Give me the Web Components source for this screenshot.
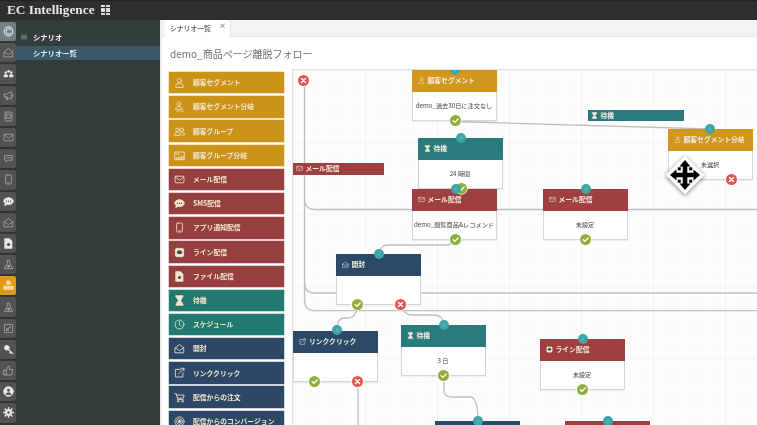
<!DOCTYPE html>
<html lang="ja"><head><meta charset="utf-8"><title>EC Intelligence</title>
<style>
html,body{margin:0;padding:0;height:425px;overflow:hidden;background:#fff}
body{font-family:"Noto Sans CJK JP","Noto Sans",sans-serif}
</style></head><body>
<x-app></x-app>
<script>
const ICONS={
user:'<circle cx="8" cy="5" r="3"/><path d="M2.5 14.5v-1.5c0-2.5 2.5-3.5 5.5-3.5s5.5 1 5.5 3.5v1.5z"/>',
usersplit:'<circle cx="7" cy="4" r="2.6"/><path d="M2.5 11c0-2 2-3 4.5-3s4.5 1 4.5 3v1h-9z"/><path d="M4 14.5h4M10 14.5h3.5"/>',
group:'<circle cx="5" cy="5.5" r="2.5"/><circle cx="11.5" cy="5.5" r="2.5"/><path d="M.8 13v-1.2c0-2 2-2.8 4.2-2.8s4.2.8 4.2 2.8V13zM10.5 9.1c2.4-.3 4.8.6 4.8 2.7V13h-3.5"/>',
groupsplit:'<path d="M1 13.5V3h14v10.5z"/><path d="M3 13.5v-2h3v2M7 13.5v-3h3v3M11 13.5V9h2.5v4.5M3 6h5"/>',
mail:'<rect x="1.5" y="3.2" width="13" height="9.6" rx="1.2"/><path d="M2 4.5l6 4.5 6-4.5"/>',
sms:'<path fill="currentColor" d="M8 2.5c3.9 0 7 2.2 7 5s-3.1 5-7 5c-.8 0-1.6-.1-2.3-.3L2.5 14l.8-3C2 10 1 8.800 1 7.500c0-2.800 3.100-5 7-5z"/><g fill="#333" stroke="none"><circle cx="5" cy="7.500" r=".9"/><circle cx="8" cy="7.500" r=".9"/><circle cx="11" cy="7.500" r=".9"/></g>',
phone:'<rect x="3.800" y="1.500" width="8.400" height="13" rx="1.600"/><path d="M7 12.800h2"/>',
line:'<rect x="2" y="2" width="12" height="12" rx="2.200" fill="currentColor"/><ellipse cx="8" cy="7.600" rx="3.700" ry="3" fill="#444" stroke="none"/>',
file:'<path fill="currentColor" d="M3 1h6.500L13 4.500V15H3z"/><circle cx="8" cy="9.500" r="2.200" fill="#444" stroke="none"/>',
hourglass:'<path fill="currentColor" d="M3 1h10v1.800h-1c0 2.700-1.500 4-2.800 5.200 1.300 1.200 2.800 2.500 2.800 5.200h1V15H3v-1.800h1c0-2.700 1.500-4 2.800-5.200C5.500 6.800 4 5.500 4 2.800H3z"/>',
clock:'<circle cx="8" cy="8" r="6.500"/><path d="M8 4v4.500l2.500 1.600"/>',
open:'<path d="M1.800 7L8 2.200 14.200 7v7.300H1.800z"/><path d="M1.800 7L8 11l6.200-4"/>',
link:'<path d="M9.500 3.500H2v11h11V8.500"/><path d="M6.500 10L14.500 2M10.500 1.800h4v4"/>',
cart:'<path d="M.8 2.500h2.600l2 8.500h7.800M4 4.500h10.800l-1.400 4.500H5"/><circle cx="6" cy="13.500" r="1.100"/><circle cx="12.500" cy="13.500" r="1.100"/>',
target:'<circle cx="8" cy="8" r="6.800"/><circle cx="8" cy="8" r="4.200"/><circle cx="8" cy="8" r="1.700" fill="currentColor"/>',
arrowc:'<circle cx="8" cy="8" r="6.300" stroke-width="1.700"/><path d="M11 5.500a3.700 3.700 0 1 0 0 5" stroke-width="1.500"/>',
people:'<g fill="currentColor" stroke="none"><circle cx="4" cy="6.500" r="1.800"/><circle cx="8" cy="4.800" r="2"/><circle cx="12" cy="6.500" r="1.800"/><path d="M1 13.500v-2.500c0-1.300 1.400-2 3-2s3 .7 3 2v2.500zM9 13.500v-2.500c0-1.300 1.400-2 3-2s3 .7 3 2v2.500z"/></g>',
mega:'<path d="M2 6v4h3l7 3.500V2.500L5 6zM4 10l1 4h2l-1-3.500M14 6v4"/>',
doc:'<rect x="3" y="1.500" width="10" height="13" rx="1.200"/><rect x="5.500" y="4.500" width="5" height="6"/>',
chat:'<path d="M3 3.500h10.500v7H7l-2.500 2.500v-2.500H3z"/><path d="M5.500 7h6"/>',
flask:'<path d="M6.500 1.800h3v3.500l4.500 8.700H2l4.500-8.700z"/><circle cx="8" cy="10.500" r="1.600" fill="currentColor"/>',
org:'<path fill="currentColor" d="M6 1.500h4l.8 4.500H5.200zM1 9h4v4.500H1zM6 9h4v4.500H6zM11 9h4v4.500h-4z"/>',
edit:'<rect x="2" y="2" width="12" height="12" rx="1"/><path d="M5 11l6-6M5 8l3 3" stroke-width="1.500"/>',
key:'<circle cx="5.500" cy="5.500" r="3.400" fill="currentColor"/><path d="M8 8l6 6M11.500 11.500l-1.500 1.500" stroke-width="2"/>',
thumb:'<path d="M1.500 7.500h3v7h-3zM4.500 8l3.300-6.300c1.300 0 2 .9 1.700 2.200L9 6.500h5l-1.300 8H4.500"/>',
cuser:'<circle cx="8" cy="8" r="7" fill="currentColor"/><circle cx="8" cy="6.200" r="2.100" fill="#555" stroke="none"/><path d="M3.800 13c.4-2.500 2-3.400 4.200-3.400s3.800.9 4.200 3.400" fill="#555" stroke="none"/>',
gear:'<circle cx="8" cy="8" r="4.500" fill="currentColor"/><circle cx="8" cy="8" r="1.800" fill="#555" stroke="none"/><path stroke-width="2.200" d="M8 1v3M8 12v3M1 8h3M12 8h3M3 3l2 2M11 11l2 2M13 3l-2 2M5 11l-2 2"/>',
menu:'<path d="M1 3h14M1 6.300h14M1 9.700h14M1 13h14" stroke-width="1.600"/>'
};
function def(name,css,html,init){
  customElements.define(name,class extends HTMLElement{
    connectedCallback(){
      if(this.shadowRoot)return;
      const r=this.attachShadow({mode:'open'});
      r.innerHTML='<style>'+css+'</style>'+(typeof html==='function'?html(this):html);
      if(init)init(this,r);
    }
  });
}
def('x-icon',':host{display:inline-block;line-height:0;flex:none}svg{width:100%;height:100%;fill:none;stroke:currentColor;stroke-width:1.200;stroke-linejoin:round;stroke-linecap:round}',
 h=>`<svg viewBox="0 0 16 16">${ICONS[h.getAttribute('name')]||''}</svg>`);

def('x-top',`:host{display:flex;align-items:center;height:20px;flex:none;background:linear-gradient(#1f1f1f 0,#2f2f2f 2px,#2e2e2e);color:#e6e6e6;padding-left:7px;gap:6px;box-sizing:border-box;font:bold 13.300px "Liberation Serif",serif;white-space:nowrap}
 .g{display:grid;grid-template-columns:repeat(4,2px);grid-auto-rows:2px;gap:.6px}.g i{background:#ddd}`,
 `<span>EC Intelligence</span><span class="g">${'<i></i>'.repeat(16)}</span>`);

def('x-rail-item',`:host{display:flex;align-items:center;justify-content:center;width:16px;height:19.200px;flex:none;box-sizing:border-box;background:#525252;color:#a9a9a9;border-radius:0 2px 2px 0}
 :host([bright]){color:#e8e8e8}:host([active]){background:#de9a17;color:#f6dfae}:host([sel]){background:#74807f;color:#cfe3e3}x-icon{width:11px;height:11px}`,
 h=>`<x-icon name="${h.getAttribute('icon')}"></x-icon>`);
def('x-rail',':host{display:flex;flex-direction:column;gap:2px;width:16px;flex:none;padding-top:2px;box-sizing:border-box;background:#2f3636;overflow:hidden}','<slot></slot>');
def('x-tree',`:host{display:block;width:144px;flex:none;background:#343c3c;color:#f0f0f0;font:bold 7.300px/14px "Noto Sans CJK JP",sans-serif;padding-top:9px;box-sizing:border-box}
 .h{display:flex;align-items:center;height:16px;padding-left:5px;gap:6px}.h x-icon{width:6px;height:6px;color:#9a9f9f}
 .s{height:14px;margin-top:1px;background:#3b5866;padding-left:17px;color:#dfe8ea}`,
 `<div class="h"><x-icon name="menu"></x-icon><span>シナリオ</span></div><div class="s">シナリオ一覧</div>`);
def('x-tabs',`:host{display:flex;height:17px;background:#f3f3f3;padding-left:3px;box-sizing:border-box;border-bottom:1px solid #e6e6e6;font:500 6.800px/17px "Noto Sans CJK JP",sans-serif;color:#555}
 .t{position:relative;width:65px;height:17px;padding-left:5px;box-sizing:border-box;background:#fff;border-radius:2px 2px 0 0;box-shadow:1px 0 0 #e4e4e4}
 .x{position:absolute;right:4px;top:-3px;font-size:7px;color:#777}`,
 `<div class="t">シナリオ一覧<span class="x">×</span></div>`);
def('x-title',`:host{display:block;height:32px;padding-left:8px;font:400 10px/33px "Noto Sans CJK JP",sans-serif;color:#6f6f6f;white-space:nowrap}`,'<slot></slot>');
def('x-pal-item',`:host{display:flex;align-items:center;height:21.400px;margin-bottom:2.800px;box-sizing:border-box;color:#f3e6d0;background:var(--c);box-shadow:0 0 0 .6px color-mix(in srgb,var(--c) 40%,#fff);font:bold 6.800px/1 "Noto Sans CJK JP",sans-serif;white-space:nowrap;padding-left:5px}
 x-icon{width:11px;height:11px;margin-right:8px}`,
 h=>`<x-icon name="${h.getAttribute('icon')}"></x-icon><slot></slot>`);
def('x-palette',':host{display:block;width:115px;flex:none;padding-top:3px}','<slot></slot>');

function place(h){h.style.left=(h.getAttribute('x')-293.5)+'px';h.style.top=(h.getAttribute('y')-70.5)+'px'}
def('x-node',`:host{position:absolute;display:block;width:85px;height:51px;box-sizing:border-box;background:#fff;border:1px solid #d5d5d5;border-top:0;font:400 6.200px/1 "Noto Sans CJK JP",sans-serif;color:#444;box-shadow:0 1px 1px rgba(0,0,0,.06)}
 .h{height:22.500px;margin:0 -1px;background:var(--c);color:#f3ebe0;font-weight:700;display:flex;align-items:center;padding-left:6px;gap:3px;white-space:nowrap;font-size:6.800px}
 .h x-icon{width:7px;height:7px}.b{height:28.500px;display:flex;align-items:center;justify-content:center;white-space:nowrap}`,
 h=>`<div class="h">${h.getAttribute('label')?`<x-icon name="${h.getAttribute('icon')}"></x-icon><span>${h.getAttribute('label')}</span>`:''}</div><div class="b"><slot></slot></div>`,
 h=>place(h));
def('x-ghost',`:host{position:absolute;display:flex;align-items:center;height:11.500px;background:var(--c);color:#f3ebe0;font:700 6.800px/1 "Noto Sans CJK JP",sans-serif;padding-left:3px;gap:3px;box-sizing:border-box;white-space:nowrap}x-icon{width:7px;height:7px}`,
 h=>`<x-icon name="${h.getAttribute('icon')}"></x-icon><slot></slot>`,h=>{place(h);h.style.width=h.getAttribute('w')+'px'});
const PIN={port:'#3ea6a8',ok:'#8fae3c',no:'#e4544e'};
def('x-pin',`:host{position:absolute;display:block;width:11px;height:11px;margin:-5.500px 0 0 -5.500px;border-radius:50%;line-height:0}svg{width:100%;height:100%;fill:none;stroke:#fff;stroke-width:2;stroke-linecap:round;stroke-linejoin:round}`,
 h=>{const k=h.getAttribute('kind');const s={ok:'<path d="M4.500 8.200l2.500 2.500 4.800-5"/>',no:'<path d="M5 5l6 6M11 5l-6 6"/>',port:'<path d="M8 6.500v3" stroke-width="1" opacity=".5"/>'}[k];return `<svg viewBox="0 0 16 16">${s}</svg>`},
 h=>{place(h);const k=h.getAttribute('kind');h.style.background=PIN[k];if(k==='port'){h.style.width=h.style.height='10px';h.style.margin='-5px 0 0 -5px'}else{h.style.boxShadow='0 0 0 .7px #fff'}});
def('x-move',`:host{position:absolute;display:block;width:40px;height:40px;margin:-20px 0 0 -20px;filter:drop-shadow(0 1px 2px rgba(0,0,0,.5))}svg{display:block;width:100%;height:100%}`,
 `<svg viewBox="0 0 40 40"><path d="M20 .500L39.500 20 20 39.500.500 20z" fill="#fff"/>
 <path fill="#000" d="M20 5l5.500 6.500h-3.200v6.200h6.200v-3.200L35 20l-6.500 5.500v-3.200h-6.200v6.200h3.200L20 35l-5.500-6.500h3.200v-6.200h-6.200v3.200L5 20l6.500-5.500v3.200h6.200v-6.200h-3.200z"/>
 <g fill="#000"><rect x="12.800" y="12.300" width="3" height="3"/><rect x="24.200" y="12.300" width="3" height="3"/><rect x="12.800" y="24.700" width="3" height="3"/><rect x="24.200" y="24.700" width="3" height="3"/></g></svg>`,
 h=>place(h));
def('x-canvas',`:host{position:relative;display:block;flex:1;min-width:0;height:356px;overflow:hidden;border-top:1.500px solid #e3e3e3;border-left:1.500px solid #e3e3e3;box-sizing:border-box;background-color:#fdfdfd;
 background-image:linear-gradient(#f4f4f4 1px,transparent 1px),linear-gradient(90deg,#f4f4f4 1px,transparent 1px),linear-gradient(#f9f9f9 1px,transparent 1px),linear-gradient(90deg,#f9f9f9 1px,transparent 1px);background-size:72px 72px,72px 72px,12px 12px,12px 12px}
 svg{position:absolute;left:-1.500px;top:-1.500px;width:465px;height:356px;fill:none;stroke:#c0c0c0;stroke-width:1.300}`,
 `<svg viewBox="292 69 465 356">
 <path d="M304.500 81V300Q304.500 310.700 315 310.700H757"/>
 <path d="M304.500 199Q304.500 209.500 315 209.500H757"/>
 <path d="M304.500 283Q304.500 293 315 293H757"/>
 <path d="M456 121Q458 122 470 122L711 129"/>
 <path d="M456 240Q452 245 445 245L388 245Q380 245 379 254"/>
 <path d="M358 305Q356 318 348 318L344 318Q337 318 337 330"/>
 <path d="M401 305Q404 315 412 315L435 315Q444 316 444 325"/>
 <path d="M444 376V390Q444 397 452 397H470Q478 397 478 421"/>
 <path d="M358 382V425"/>
 </svg><slot></slot>`);
def('x-main',`:host{display:block;flex:1;min-width:0;background:#fff;border-left:2px solid #e9edef;box-sizing:border-box;overflow:hidden}
 .r{display:flex;gap:8px;padding-left:7px}`,
 `<slot name="top"></slot><div class="r"><slot name="pal"></slot><slot name="canvas"></slot></div>`);

const RAIL=['arrowc','open','people','mega','doc','mail','chat','phone','sms','open','file','flask','org','flask','edit','key','thumb','cuser','gear'];
const BRIGHT=[2,8,10,15,17,18];
const PAL=[['user','顧客セグメント','#cb9419'],['usersplit','顧客セグメント分岐','#cb9419'],['group','顧客グループ','#cb9419'],['groupsplit','顧客グループ分岐','#cb9419'],
['mail','メール配信','#963f3f'],['sms','SMS配信','#963f3f'],['phone','アプリ通知配信','#963f3f'],['line','ライン配信','#963f3f'],['file','ファイル配信','#963f3f'],
['hourglass','待機','#22796f'],['clock','スケジュール','#22796f'],['open','開封','#2d4866'],['link','リンククリック','#2d4866'],['cart','配信からの注文','#2d4866'],['target','配信からのコンバージョン','#2d4866']];
const G='#d1961c',R='#a03f3f',T='#2a7b7b',N='#2c4a68';
const NODES=[
 [412,70,G,'user','顧客セグメント','demo_過去30日に注文なし'],
 [418,138,T,'hourglass','待機','24 時間'],
 [412,189,R,'mail','メール配信','demo_閲覧商品&amp;レコメンド'],
 [543,189,R,'mail','メール配信','未設定'],
 [668,129,G,'user','顧客セグメント分岐','未選択'],
 [336,254,N,'open','開封',''],
 [293.500,331,N,'link','リンククリック',''],
 [401,325,T,'hourglass','待機','3 日'],
 [540,339,R,'line','ライン配信','未設定'],
 [435,421.500,N,'open','',''],
 [565,421.500,R,'mail','','']
];
const PINS=[['no',304,81],['port',455,70],['ok',455.500,121],['ok',462,189],['port',461,138],['port',456,189],['ok',456,240],['port',586,189],['ok',586,240],['port',710,129],['no',732,180],
['port',379,254.500],['ok',358,305],['no',401,305],['port',337,330],['ok',315,381.700],['no',358,381.700],['port',444,325],['ok',444,376],['port',583,339],['ok',583,390],['port',478,421],['port',608,421]];

def('x-app',`:host{display:flex;flex-direction:column;width:757px;height:425px;overflow:hidden;filter:blur(.5px)}.b{display:flex;flex:1;min-height:0}`,
 `<x-top></x-top><div class="b"><x-rail>${RAIL.map((n,i)=>`<x-rail-item icon="${n}" ${i==12?'active':''} ${i==0?'sel':''} ${BRIGHT.includes(i)?'bright':''}></x-rail-item>`).join('')}</x-rail>
 <x-tree></x-tree>
 <x-main>
  <div slot="top"><x-tabs></x-tabs><x-title>demo_商品ページ離脱フォロー</x-title></div>
  <x-palette slot="pal">${PAL.map(p=>`<x-pal-item icon="${p[0]}" style="--c:${p[2]}">${p[1]}</x-pal-item>`).join('')}</x-palette>
  <x-canvas slot="canvas">
   ${NODES.map(n=>`<x-node x="${n[0]}" y="${n[1]}" icon="${n[3]}" label="${n[4]}" style="--c:${n[2]}">${n[5]}</x-node>`).join('')}
   <x-ghost x="293" y="163.500" w="91" icon="mail" style="--c:${R}">メール配信</x-ghost>
   <x-ghost x="588" y="110" w="96" icon="hourglass" style="--c:${T}">待機</x-ghost>
   ${PINS.map(p=>`<x-pin kind="${p[0]}" x="${p[1]}" y="${p[2]}"></x-pin>`).join('')}
   <x-move x="685" y="175"></x-move>
  </x-canvas>
 </x-main></div>`);
</script>
</body></html>
